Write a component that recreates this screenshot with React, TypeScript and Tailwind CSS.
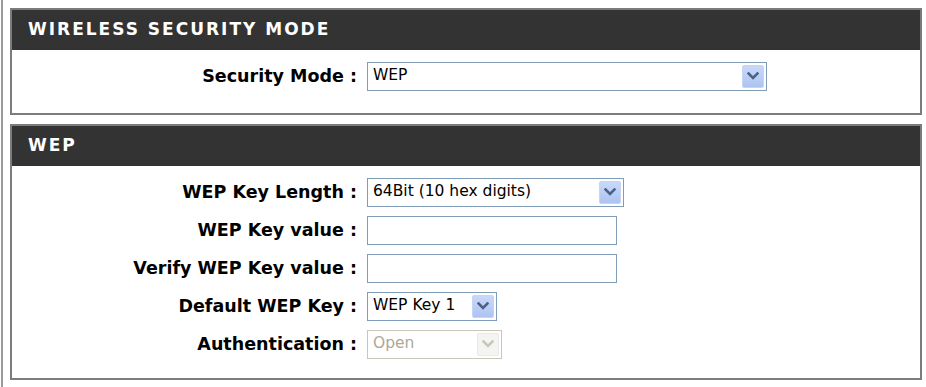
import React from 'react';

const labelFont = { fontFamily: '"DejaVu Sans", Verdana, sans-serif' };

function Chevron({ disabled }: { disabled?: boolean }) {
  return (
    <svg width="12" height="8" viewBox="0 0 12 8" fill="none">
      <path
        d="M1.5 1.5 L6 6 L10.5 1.5"
        stroke={disabled ? '#c9c7ba' : '#4d6185'}
        strokeWidth="2.6"
        strokeLinecap="square"
      />
    </svg>
  );
}

function FakeSelect({ value, width, disabled }: { value: string; width: string; disabled?: boolean }) {
  return (
    <div
      className={`flex h-[29px] items-center border bg-white p-[2px] ${width} ${
        disabled ? 'border-[#c9c7ba]' : 'border-[#7f9db9]'
      }`}
    >
      <span
        className={`flex-1 pl-[3px] text-[15.5px] leading-none ${disabled ? 'text-[#aca899]' : 'text-black'}`}
        style={labelFont}
      >
        {value}
      </span>
      <div
        className={`flex h-full w-[22px] items-center justify-center rounded-[2px] border ${
          disabled
            ? 'border-[#e8e8e8] bg-[#f4f4f0]'
            : 'border-[#c6d5f5] bg-gradient-to-b from-[#c8d8fa] to-[#adc4f2]'
        }`}
      >
        <Chevron disabled={disabled} />
      </div>
    </div>
  );
}

function TextBox() {
  return <div className="h-[29px] w-[250px] border border-[#7f9db9] bg-white" />;
}

function Row({ label, children }: { label: string; children: React.ReactNode }) {
  return (
    <div className="flex h-[38px] items-center">
      <div className="w-[345px] text-right text-[17.5px] font-bold text-black" style={labelFont}>
        {label}
      </div>
      <div className="ml-[10px]">{children}</div>
    </div>
  );
}

function Box({ title, children, bodyClass }: { title: string; children: React.ReactNode; bodyClass: string }) {
  return (
    <div className="w-[912px] border-2 border-[#7c7c7c] bg-white">
      <div
        className="flex h-[40px] items-center bg-[#333333] pl-4 text-[17px] font-bold tracking-[2px] text-white"
        style={labelFont}
      >
        {title}
      </div>
      <div className={bodyClass}>{children}</div>
    </div>
  );
}

export default function App() {
  return (
    <div className="h-[387px] w-[926px] bg-white">
      <div className="ml-[1px] flex h-full flex-col gap-[9px] border-l-2 border-[#9a9a9a] pl-[7px] pt-[8px]">
        <Box title="WIRELESS SECURITY MODE" bodyClass="pt-[7px] pb-[18px]">
          <Row label="Security Mode :">
            <FakeSelect value="WEP" width="w-[400px]" />
          </Row>
        </Box>
        <Box title="WEP" bodyClass="pt-[7px] pb-[15px]">
          <Row label="WEP Key Length :">
            <FakeSelect value="64Bit (10 hex digits)" width="w-[257px]" />
          </Row>
          <Row label="WEP Key value :">
            <TextBox />
          </Row>
          <Row label="Verify WEP Key value :">
            <TextBox />
          </Row>
          <Row label="Default WEP Key :">
            <FakeSelect value="WEP Key 1" width="w-[130px]" />
          </Row>
          <Row label="Authentication :">
            <FakeSelect value="Open" width="w-[135px]" disabled />
          </Row>
        </Box>
      </div>
    </div>
  );
}
